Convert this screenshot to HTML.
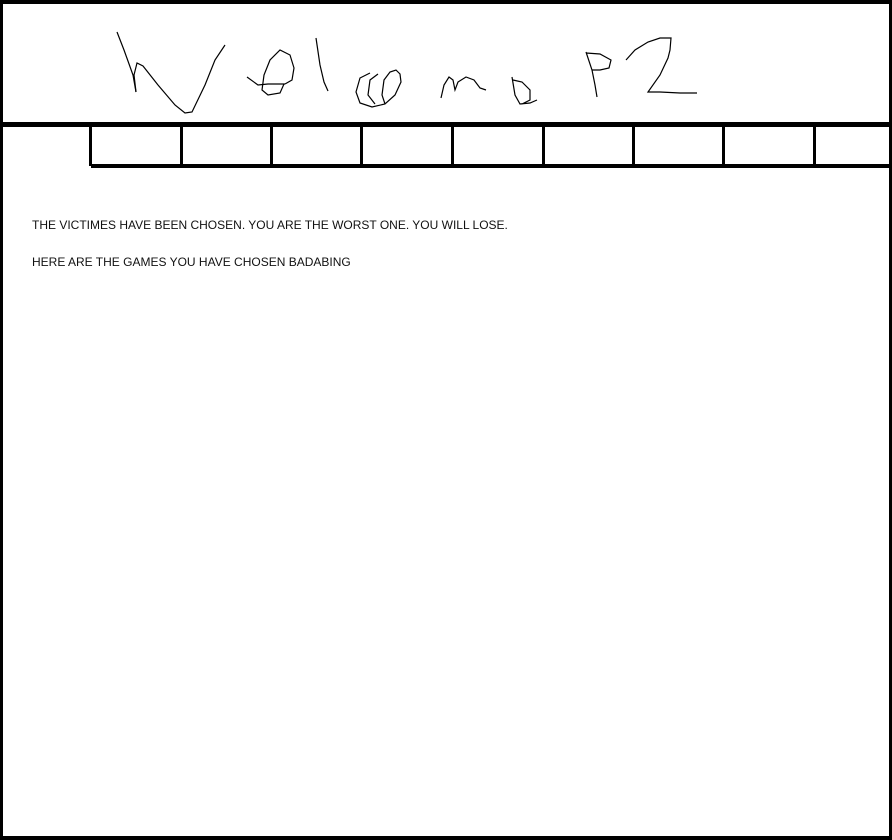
<!DOCTYPE html>
<html><head><style>
html,body{margin:0;padding:0;background:#fff;}
body{width:892px;height:840px;position:relative;overflow:hidden;font-family:"Liberation Sans",sans-serif;}
.b{position:absolute;background:#000;}
.t{position:absolute;left:32px;font-size:12px;color:#111;white-space:nowrap;}
</style></head><body>
<div class="b" style="left:0;top:0;width:892px;height:4px"></div>
<div class="b" style="left:0;top:0;width:3px;height:840px"></div>
<div class="b" style="left:889px;top:0;width:3px;height:840px"></div>
<div class="b" style="left:0;top:836px;width:892px;height:4px"></div>
<div class="b" style="left:0;top:122px;width:892px;height:5px"></div>
<div class="b" style="left:91px;top:164px;width:801px;height:4px"></div>
<div class="b" style="left:89px;top:127px;width:3px;height:39px"></div>
<div class="b" style="left:180px;top:127px;width:3px;height:38px"></div>
<div class="b" style="left:270px;top:127px;width:3px;height:38px"></div>
<div class="b" style="left:360px;top:127px;width:3px;height:38px"></div>
<div class="b" style="left:451px;top:127px;width:3px;height:38px"></div>
<div class="b" style="left:542px;top:127px;width:3px;height:38px"></div>
<div class="b" style="left:632px;top:127px;width:3px;height:38px"></div>
<div class="b" style="left:722px;top:127px;width:3px;height:38px"></div>
<div class="b" style="left:813px;top:127px;width:3px;height:38px"></div>
<svg style="position:absolute;left:0;top:0" width="892" height="122" fill="none" stroke="#000" stroke-width="1.2">
<path d="M117 32 L124 50 L133 75 L136 92"/>
<path d="M136 92 L134 75 L137 63 L143 66 L158 85 L175 105 L185 113 L192 112 L205 85 L215 60 L225 45"/>
<path d="M247 77 L258 85 L268 84 L285 84 M284 84 L280 93 L268 95 L262 90 L264 75 L270 60 L280 50 L290 55 L294 68 L292 80 L285 84"/>
<path d="M316 38 L320 65 L324 82 L328 91"/>
<path d="M370 73 L360 78 L356 92 L360 103 L372 107 L385 104 L395 95 L401 82 L400 74 L396 70 L390 72 L384 80 L382 95 L385 104"/>
<path d="M378 74 L370 80 L368 95 L375 104"/>
<path d="M441 98 L444 85 L449 77 L453 80 L455 90 L458 82 L466 77 L474 80 L480 88 L486 90"/>
<path d="M512 77 L515 95 L520 104 L530 103 L537 100 M513 80 L522 82 L530 90 L530 100 L522 104"/>
<path d="M586 52 L592 70 L595 85 L597 97 M586 53 L600 54 L611 60 L609 68 L600 70 L592 70"/>
<path d="M626 60 L635 50 L648 42 L660 38 L671 38 L670 50 L668 58 L660 75 L648 92 L660 92 L680 93 L697 93"/>
</svg>
<div class="t" style="top:218px">THE VICTIMES HAVE BEEN CHOSEN. YOU ARE THE WORST ONE. YOU WILL LOSE.</div>
<div class="t" style="top:255px">HERE ARE THE GAMES YOU HAVE CHOSEN BADABING</div>
</body></html>
